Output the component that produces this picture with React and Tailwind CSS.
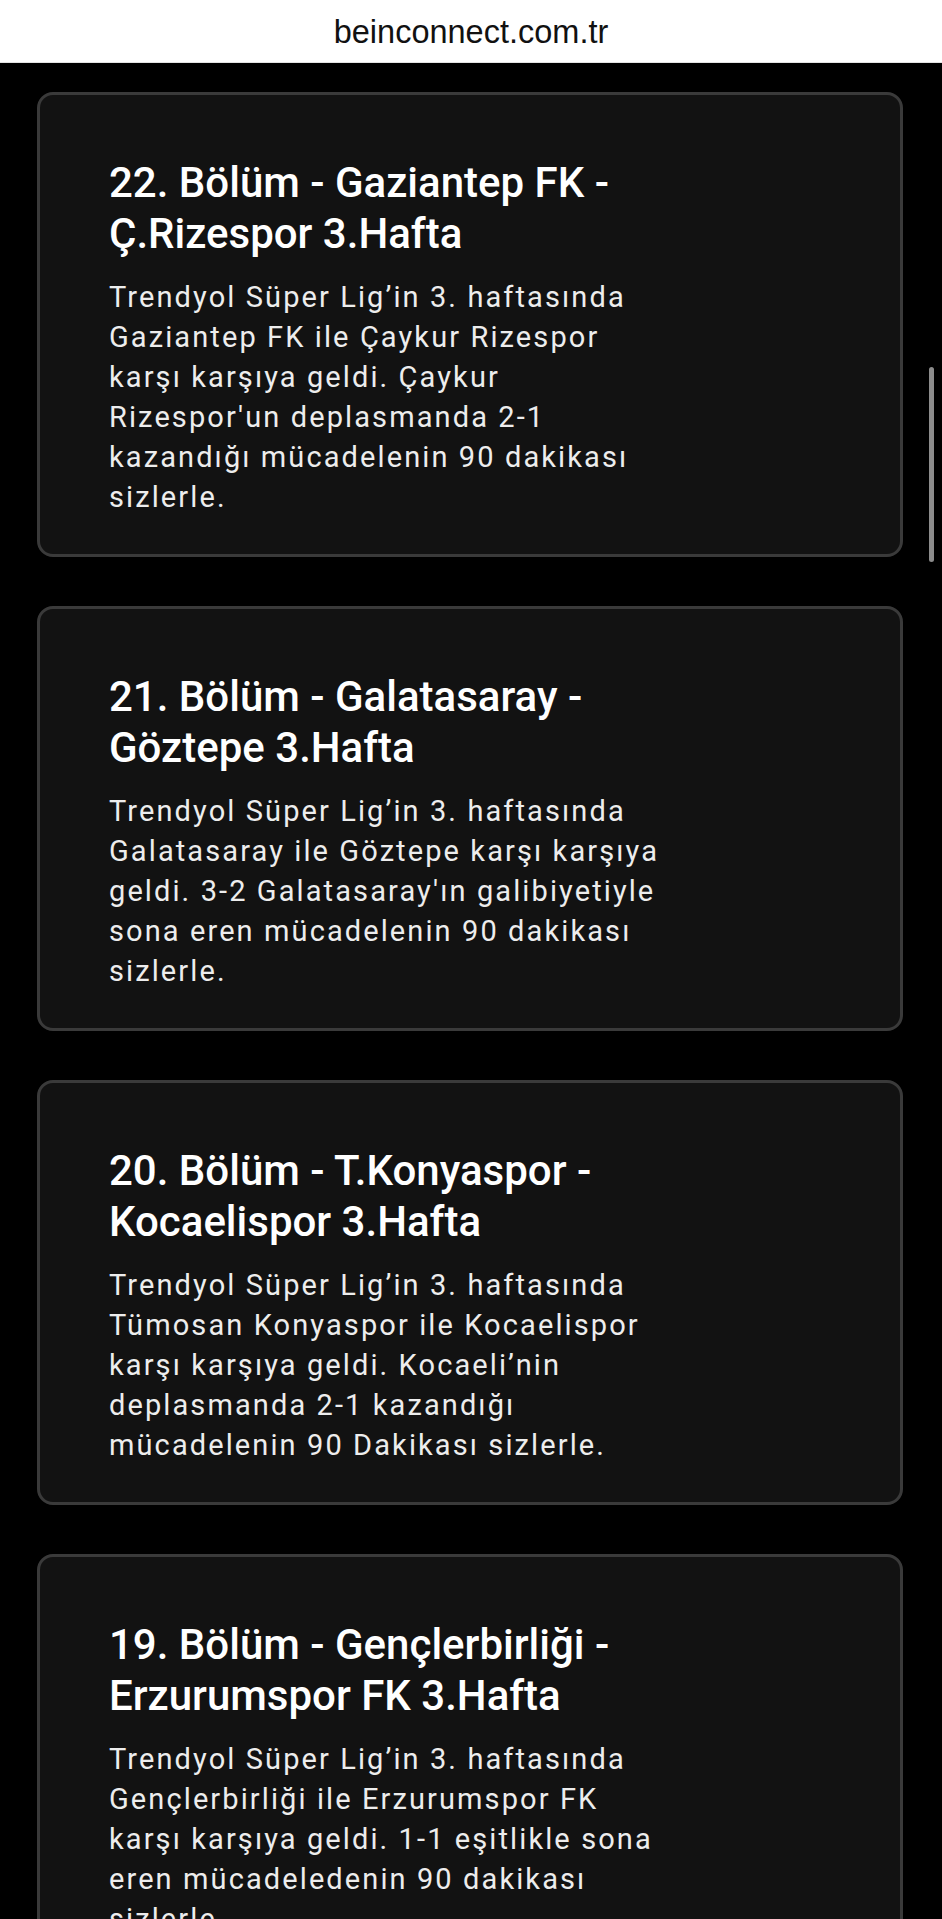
import React from "react";

const episodes = [
  {
    title: "22. Bölüm - Gaziantep FK - Ç.Rizespor 3.Hafta",
    text: "Trendyol Süper Lig’in 3. haftasında Gaziantep FK ile Çaykur Rizespor karşı karşıya geldi. Çaykur Rizespor'un deplasmanda 2-1 kazandığı mücadelenin 90 dakikası sizlerle.",
  },
  {
    title: "21. Bölüm - Galatasaray - Göztepe 3.Hafta",
    text: "Trendyol Süper Lig’in 3. haftasında Galatasaray ile Göztepe karşı karşıya geldi. 3-2 Galatasaray'ın galibiyetiyle sona eren mücadelenin 90 dakikası sizlerle.",
  },
  {
    title: "20. Bölüm - T.Konyaspor - Kocaelispor 3.Hafta",
    text: "Trendyol Süper Lig’in 3. haftasında Tümosan Konyaspor ile Kocaelispor karşı karşıya geldi. Kocaeli’nin deplasmanda 2-1 kazandığı mücadelenin 90 Dakikası sizlerle.",
  },
  {
    title: "19. Bölüm - Gençlerbirliği - Erzurumspor FK 3.Hafta",
    text: "Trendyol Süper Lig’in 3. haftasında Gençlerbirliği ile Erzurumspor FK karşı karşıya geldi. 1-1 eşitlikle sona eren mücadeledenin 90 dakikası sizlerle.",
  },
];

function EpisodeCard({ title, text }) {
  return (
    <div className="rounded-[16px] border-[3px] border-[#3a3a3a] bg-[#121212] pt-[62px] pb-[37px] pl-[69px] pr-[40px]">
      <h2 className="max-w-[570px] text-[42px] leading-[51px] font-medium text-white">
        {title}
      </h2>
      <p className="mt-[18px] max-w-[560px] text-[29px] leading-[40px] tracking-[2.1px] text-[#ededed]">
        {text}
      </p>
    </div>
  );
}

export default function App() {
  return (
    <div className="relative h-[1919px] overflow-hidden bg-black font-['Roboto',sans-serif]">
      {/* browser url bar */}
      <div className="flex h-[63px] items-center justify-center bg-white border-b border-[#e2e2e2]">
        <span className="font-['Liberation_Sans',Arial,sans-serif] text-[32.5px] text-[#111] pt-[2px]">
          beinconnect.com.tr
        </span>
      </div>

      <div className="flex flex-col gap-[49px] pt-[29px] pl-[37px] pr-[39px]">
        {episodes.map((ep) => (
          <EpisodeCard key={ep.title} title={ep.title} text={ep.text} />
        ))}
      </div>

      {/* overlay scrollbar */}
      <div className="absolute left-[929px] top-[367px] h-[195px] w-[5px] rounded-full bg-[#8c8c8c]" />
    </div>
  );
}
